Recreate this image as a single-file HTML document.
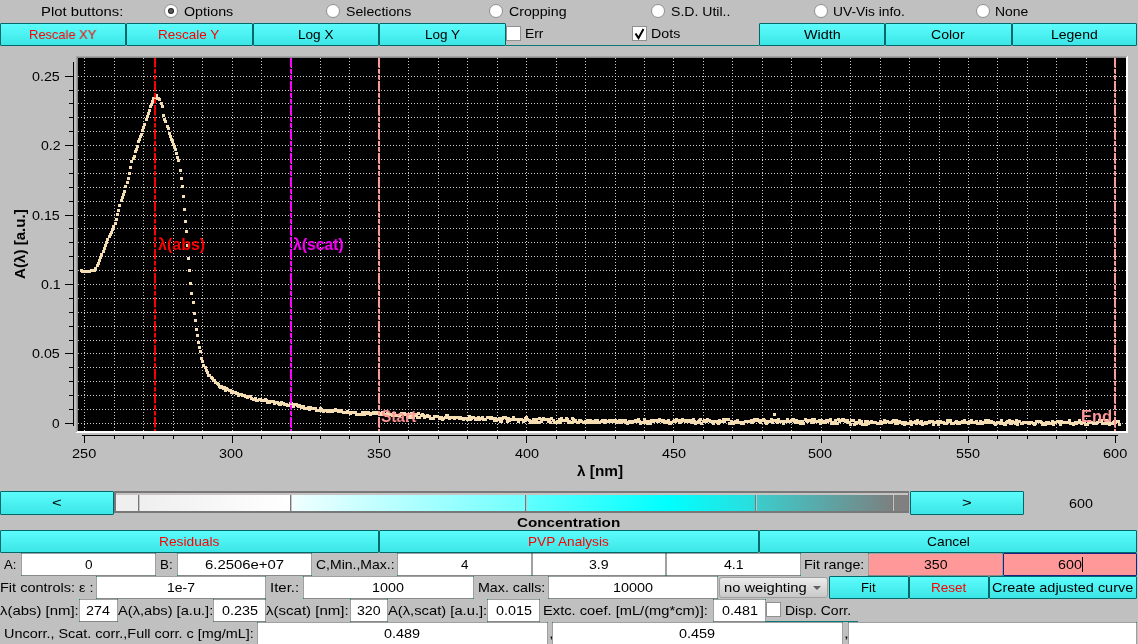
<!DOCTYPE html><html><head><meta charset="utf-8"><style>
*{margin:0;padding:0}
html,body{width:1138px;height:644px;overflow:hidden;background:#c0c0c0;position:relative}
.t{position:absolute;font-family:"Liberation Sans",sans-serif;font-size:13px;line-height:20px;white-space:pre;transform-origin:0 0;will-change:transform}
.btn,.fld,.rad,.dot,.chk,.combo{position:absolute;box-sizing:border-box}
.btn{border:1px solid #006868;border-radius:1px;background:linear-gradient(#5cfcfc,#3ce6e6)}
.fld{background:#fff;border:1px solid #a0a0a0;border-bottom-color:#888}
.fld::before{content:'';position:absolute;left:-1px;top:-1px;right:-1px;bottom:-1px;background:linear-gradient(#1a8a8a,#1a8a8a) 0 0/1px 1px no-repeat,linear-gradient(#1a8a8a,#1a8a8a) 100% 0/1px 1px no-repeat,linear-gradient(#1a8a8a,#1a8a8a) 0 100%/1px 1px no-repeat,linear-gradient(#1a8a8a,#1a8a8a) 100% 100%/1px 1px no-repeat}
.fld.pink{background:#ff9999}
.fld.focus{border-color:#202080}
.rad{border-radius:50%;background:#fff;border:1px solid #909090}
.dot{border-radius:50%;background:radial-gradient(circle,#5a5a5a 0,#5a5a5a 1.5px,#222 2.2px)}
.chk{background:#fff;border:1px solid #909090}
.combo{border:1px solid #a0a0a0;border-radius:3px;background:linear-gradient(#ececec,#c8c8c8)}
svg.plot{position:absolute;left:0;top:0}
</style></head><body><div class="t" style="left:40.86px;top:2px;color:#000;transform:scaleX(1.1396)">Plot buttons:</div><div class="rad" style="left:164px;top:4px;width:14px;height:14px;"></div><div class="dot" style="left:168px;top:8px;width:6px;height:6px;"></div><div class="t" style="left:184.14px;top:2px;color:#000;transform:scaleX(1.0997)">Options</div><div class="rad" style="left:326px;top:4px;width:14px;height:14px;"></div><div class="t" style="left:346.06px;top:2px;color:#000;transform:scaleX(1.0883)">Selections</div><div class="rad" style="left:489px;top:4px;width:14px;height:14px;"></div><div class="t" style="left:509.05px;top:2px;color:#000;transform:scaleX(1.0906)">Cropping</div><div class="rad" style="left:651px;top:4px;width:14px;height:14px;"></div><div class="t" style="left:671.46px;top:2px;color:#000;transform:scaleX(1.0829)">S.D. Util..</div><div class="rad" style="left:814px;top:4px;width:14px;height:14px;"></div><div class="t" style="left:833.44px;top:2px;color:#000;transform:scaleX(1.0601)">UV-Vis info.</div><div class="rad" style="left:976px;top:4px;width:14px;height:14px;"></div><div class="t" style="left:994.93px;top:2px;color:#000;transform:scaleX(1.0718)">None</div><div style="position:absolute;left:506px;top:45px;width:253px;height:1px;background:#0a7878"></div><div class="btn" style="left:0px;top:23px;width:126px;height:23px;"></div><div class="t" style="left:29.01px;top:25px;color:#ff0000;transform:scaleX(0.9910)">Rescale XY</div><div class="btn" style="left:126px;top:23px;width:127px;height:23px;"></div><div class="t" style="left:158.47px;top:25px;color:#ff0000;transform:scaleX(1.0396)">Rescale Y</div><div class="btn" style="left:253px;top:23px;width:126px;height:23px;"></div><div class="t" style="left:297.87px;top:25px;color:#000;transform:scaleX(1.0452)">Log X</div><div class="btn" style="left:379px;top:23px;width:127px;height:23px;"></div><div class="t" style="left:424.62px;top:25px;color:#000;transform:scaleX(1.0365)">Log Y</div><div class="chk" style="left:506px;top:26px;width:15px;height:15px;"></div><div class="t" style="left:524.94px;top:24px;color:#000;transform:scaleX(1.0640)">Err</div><div class="chk" style="left:632px;top:26px;width:15px;height:15px;"></div><svg style="position:absolute;left:632px;top:26px" width="15" height="15"><path d="M3.5 7.5 L6.5 12 L11.5 3" stroke="#000" stroke-width="2" fill="none"/></svg><div class="t" style="left:651.41px;top:24px;color:#000;transform:scaleX(1.0940)">Dots</div><div class="btn" style="left:759px;top:23px;width:126px;height:23px;"></div><div class="t" style="left:804.12px;top:25px;color:#000;transform:scaleX(1.1036)">Width</div><div class="btn" style="left:885px;top:23px;width:127px;height:23px;"></div><div class="t" style="left:931.45px;top:25px;color:#000;transform:scaleX(1.0825)">Color</div><div class="btn" style="left:1012px;top:23px;width:125px;height:23px;"></div><div class="t" style="left:1051.06px;top:25px;color:#000;transform:scaleX(1.0776)">Legend</div><svg class="plot" width="1138" height="644" shape-rendering="crispEdges"><rect x="76" y="56" width="1052" height="377" fill="#a4a4a4"/><rect x="77" y="57" width="1051" height="375" fill="#888888"/><rect x="1127" y="56" width="1" height="377" fill="#ffffff"/><rect x="1126" y="57" width="1" height="376" fill="#ffffff"/><rect x="77" y="431" width="1051" height="1" fill="#ffffff"/><rect x="76" y="432" width="1052" height="1" fill="#ffffff"/><rect x="78" y="58" width="1048" height="373" fill="#000000"/><line x1="84.5" y1="58" x2="84.5" y2="431" stroke="#cccccc" stroke-width="1" stroke-dasharray="1 2"/><line x1="114.5" y1="58" x2="114.5" y2="431" stroke="#cccccc" stroke-width="1" stroke-dasharray="1 2"/><line x1="143.5" y1="58" x2="143.5" y2="431" stroke="#cccccc" stroke-width="1" stroke-dasharray="1 2"/><line x1="173.5" y1="58" x2="173.5" y2="431" stroke="#cccccc" stroke-width="1" stroke-dasharray="1 2"/><line x1="202.5" y1="58" x2="202.5" y2="431" stroke="#cccccc" stroke-width="1" stroke-dasharray="1 2"/><line x1="232.5" y1="58" x2="232.5" y2="431" stroke="#cccccc" stroke-width="1" stroke-dasharray="1 2"/><line x1="261.5" y1="58" x2="261.5" y2="431" stroke="#cccccc" stroke-width="1" stroke-dasharray="1 2"/><line x1="291.5" y1="58" x2="291.5" y2="431" stroke="#cccccc" stroke-width="1" stroke-dasharray="1 2"/><line x1="320.5" y1="58" x2="320.5" y2="431" stroke="#cccccc" stroke-width="1" stroke-dasharray="1 2"/><line x1="349.5" y1="58" x2="349.5" y2="431" stroke="#cccccc" stroke-width="1" stroke-dasharray="1 2"/><line x1="379.5" y1="58" x2="379.5" y2="431" stroke="#cccccc" stroke-width="1" stroke-dasharray="1 2"/><line x1="408.5" y1="58" x2="408.5" y2="431" stroke="#cccccc" stroke-width="1" stroke-dasharray="1 2"/><line x1="438.5" y1="58" x2="438.5" y2="431" stroke="#cccccc" stroke-width="1" stroke-dasharray="1 2"/><line x1="467.5" y1="58" x2="467.5" y2="431" stroke="#cccccc" stroke-width="1" stroke-dasharray="1 2"/><line x1="497.5" y1="58" x2="497.5" y2="431" stroke="#cccccc" stroke-width="1" stroke-dasharray="1 2"/><line x1="526.5" y1="58" x2="526.5" y2="431" stroke="#cccccc" stroke-width="1" stroke-dasharray="1 2"/><line x1="556.5" y1="58" x2="556.5" y2="431" stroke="#cccccc" stroke-width="1" stroke-dasharray="1 2"/><line x1="585.5" y1="58" x2="585.5" y2="431" stroke="#cccccc" stroke-width="1" stroke-dasharray="1 2"/><line x1="615.5" y1="58" x2="615.5" y2="431" stroke="#cccccc" stroke-width="1" stroke-dasharray="1 2"/><line x1="644.5" y1="58" x2="644.5" y2="431" stroke="#cccccc" stroke-width="1" stroke-dasharray="1 2"/><line x1="673.5" y1="58" x2="673.5" y2="431" stroke="#cccccc" stroke-width="1" stroke-dasharray="1 2"/><line x1="703.5" y1="58" x2="703.5" y2="431" stroke="#cccccc" stroke-width="1" stroke-dasharray="1 2"/><line x1="732.5" y1="58" x2="732.5" y2="431" stroke="#cccccc" stroke-width="1" stroke-dasharray="1 2"/><line x1="762.5" y1="58" x2="762.5" y2="431" stroke="#cccccc" stroke-width="1" stroke-dasharray="1 2"/><line x1="791.5" y1="58" x2="791.5" y2="431" stroke="#cccccc" stroke-width="1" stroke-dasharray="1 2"/><line x1="821.5" y1="58" x2="821.5" y2="431" stroke="#cccccc" stroke-width="1" stroke-dasharray="1 2"/><line x1="850.5" y1="58" x2="850.5" y2="431" stroke="#cccccc" stroke-width="1" stroke-dasharray="1 2"/><line x1="880.5" y1="58" x2="880.5" y2="431" stroke="#cccccc" stroke-width="1" stroke-dasharray="1 2"/><line x1="909.5" y1="58" x2="909.5" y2="431" stroke="#cccccc" stroke-width="1" stroke-dasharray="1 2"/><line x1="939.5" y1="58" x2="939.5" y2="431" stroke="#cccccc" stroke-width="1" stroke-dasharray="1 2"/><line x1="968.5" y1="58" x2="968.5" y2="431" stroke="#cccccc" stroke-width="1" stroke-dasharray="1 2"/><line x1="997.5" y1="58" x2="997.5" y2="431" stroke="#cccccc" stroke-width="1" stroke-dasharray="1 2"/><line x1="1027.5" y1="58" x2="1027.5" y2="431" stroke="#cccccc" stroke-width="1" stroke-dasharray="1 2"/><line x1="1056.5" y1="58" x2="1056.5" y2="431" stroke="#cccccc" stroke-width="1" stroke-dasharray="1 2"/><line x1="1086.5" y1="58" x2="1086.5" y2="431" stroke="#cccccc" stroke-width="1" stroke-dasharray="1 2"/><line x1="1115.5" y1="58" x2="1115.5" y2="431" stroke="#cccccc" stroke-width="1" stroke-dasharray="1 2"/><line x1="78" y1="423.5" x2="1126" y2="423.5" stroke="#cccccc" stroke-width="1" stroke-dasharray="1 2"/><line x1="78" y1="409.5" x2="1126" y2="409.5" stroke="#cccccc" stroke-width="1" stroke-dasharray="1 2"/><line x1="78" y1="395.5" x2="1126" y2="395.5" stroke="#cccccc" stroke-width="1" stroke-dasharray="1 2"/><line x1="78" y1="381.5" x2="1126" y2="381.5" stroke="#cccccc" stroke-width="1" stroke-dasharray="1 2"/><line x1="78" y1="367.5" x2="1126" y2="367.5" stroke="#cccccc" stroke-width="1" stroke-dasharray="1 2"/><line x1="78" y1="353.5" x2="1126" y2="353.5" stroke="#cccccc" stroke-width="1" stroke-dasharray="1 2"/><line x1="78" y1="340.5" x2="1126" y2="340.5" stroke="#cccccc" stroke-width="1" stroke-dasharray="1 2"/><line x1="78" y1="326.5" x2="1126" y2="326.5" stroke="#cccccc" stroke-width="1" stroke-dasharray="1 2"/><line x1="78" y1="312.5" x2="1126" y2="312.5" stroke="#cccccc" stroke-width="1" stroke-dasharray="1 2"/><line x1="78" y1="298.5" x2="1126" y2="298.5" stroke="#cccccc" stroke-width="1" stroke-dasharray="1 2"/><line x1="78" y1="284.5" x2="1126" y2="284.5" stroke="#cccccc" stroke-width="1" stroke-dasharray="1 2"/><line x1="78" y1="270.5" x2="1126" y2="270.5" stroke="#cccccc" stroke-width="1" stroke-dasharray="1 2"/><line x1="78" y1="256.5" x2="1126" y2="256.5" stroke="#cccccc" stroke-width="1" stroke-dasharray="1 2"/><line x1="78" y1="242.5" x2="1126" y2="242.5" stroke="#cccccc" stroke-width="1" stroke-dasharray="1 2"/><line x1="78" y1="228.5" x2="1126" y2="228.5" stroke="#cccccc" stroke-width="1" stroke-dasharray="1 2"/><line x1="78" y1="215.5" x2="1126" y2="215.5" stroke="#cccccc" stroke-width="1" stroke-dasharray="1 2"/><line x1="78" y1="201.5" x2="1126" y2="201.5" stroke="#cccccc" stroke-width="1" stroke-dasharray="1 2"/><line x1="78" y1="187.5" x2="1126" y2="187.5" stroke="#cccccc" stroke-width="1" stroke-dasharray="1 2"/><line x1="78" y1="173.5" x2="1126" y2="173.5" stroke="#cccccc" stroke-width="1" stroke-dasharray="1 2"/><line x1="78" y1="159.5" x2="1126" y2="159.5" stroke="#cccccc" stroke-width="1" stroke-dasharray="1 2"/><line x1="78" y1="145.5" x2="1126" y2="145.5" stroke="#cccccc" stroke-width="1" stroke-dasharray="1 2"/><line x1="78" y1="131.5" x2="1126" y2="131.5" stroke="#cccccc" stroke-width="1" stroke-dasharray="1 2"/><line x1="78" y1="117.5" x2="1126" y2="117.5" stroke="#cccccc" stroke-width="1" stroke-dasharray="1 2"/><line x1="78" y1="103.5" x2="1126" y2="103.5" stroke="#cccccc" stroke-width="1" stroke-dasharray="1 2"/><line x1="78" y1="90.5" x2="1126" y2="90.5" stroke="#cccccc" stroke-width="1" stroke-dasharray="1 2"/><line x1="78" y1="76.5" x2="1126" y2="76.5" stroke="#cccccc" stroke-width="1" stroke-dasharray="1 2"/><path d="M80 269h3v3h-3zM81 270h3v3h-3zM82 270h3v3h-3zM84 270h3v3h-3zM85 270h3v3h-3zM86 270h3v3h-3zM87 270h3v3h-3zM88 270h3v3h-3zM90 269h3v3h-3zM91 269h3v3h-3zM92 269h3v3h-3zM93 269h3v3h-3zM94 267h3v3h-3zM96 264h3v3h-3zM97 262h3v3h-3zM98 259h3v3h-3zM99 256h3v3h-3zM100 253h3v3h-3zM102 250h3v3h-3zM103 247h3v3h-3zM104 244h3v3h-3zM105 241h3v3h-3zM106 238h3v3h-3zM108 235h3v3h-3zM109 233h3v3h-3zM110 231h3v3h-3zM111 228h3v3h-3zM112 225h3v3h-3zM114 222h3v3h-3zM115 218h3v3h-3zM116 213h3v3h-3zM117 209h3v3h-3zM118 204h3v3h-3zM120 199h3v3h-3zM121 196h3v3h-3zM122 193h3v3h-3zM123 190h3v3h-3zM124 185h3v3h-3zM126 181h3v3h-3zM127 177h3v3h-3zM128 172h3v3h-3zM129 166h3v3h-3zM130 160h3v3h-3zM204 366h3v3h-3zM205 369h3v3h-3zM206 371h3v3h-3zM207 374h3v3h-3zM208 374h3v3h-3zM210 376h3v3h-3zM211 377h3v3h-3zM212 379h3v3h-3zM213 379h3v3h-3zM214 381h3v3h-3zM216 382h3v3h-3zM217 383h3v3h-3zM218 385h3v3h-3zM219 386h3v3h-3zM220 385h3v3h-3zM222 387h3v3h-3zM223 386h3v3h-3zM224 389h3v3h-3zM225 387h3v3h-3zM226 388h3v3h-3zM228 389h3v3h-3zM229 389h3v3h-3zM230 391h3v3h-3zM231 390h3v3h-3zM232 391h3v3h-3zM234 391h3v3h-3zM235 392h3v3h-3zM236 392h3v3h-3zM237 394h3v3h-3zM238 393h3v3h-3zM240 393h3v3h-3zM241 394h3v3h-3zM242 394h3v3h-3zM243 394h3v3h-3zM244 395h3v3h-3zM246 396h3v3h-3zM247 395h3v3h-3zM248 395h3v3h-3zM249 395h3v3h-3zM250 397h3v3h-3zM252 398h3v3h-3zM253 398h3v3h-3zM254 397h3v3h-3zM255 399h3v3h-3zM256 399h3v3h-3zM258 398h3v3h-3zM259 398h3v3h-3zM260 399h3v3h-3zM261 399h3v3h-3zM262 399h3v3h-3zM264 398h3v3h-3zM265 399h3v3h-3zM266 401h3v3h-3zM267 400h3v3h-3zM268 401h3v3h-3zM270 400h3v3h-3zM271 400h3v3h-3zM272 400h3v3h-3zM273 402h3v3h-3zM274 401h3v3h-3zM276 401h3v3h-3zM277 402h3v3h-3zM278 403h3v3h-3zM279 403h3v3h-3zM280 401h3v3h-3zM282 402h3v3h-3zM283 403h3v3h-3zM284 403h3v3h-3zM285 403h3v3h-3zM286 404h3v3h-3zM288 404h3v3h-3zM289 402h3v3h-3zM290 402h3v3h-3zM291 403h3v3h-3zM292 405h3v3h-3zM294 403h3v3h-3zM295 403h3v3h-3zM296 404h3v3h-3zM297 405h3v3h-3zM298 404h3v3h-3zM300 406h3v3h-3zM301 405h3v3h-3zM302 405h3v3h-3zM303 407h3v3h-3zM304 407h3v3h-3zM306 407h3v3h-3zM307 406h3v3h-3zM308 408h3v3h-3zM309 406h3v3h-3zM310 407h3v3h-3zM312 407h3v3h-3zM313 407h3v3h-3zM314 407h3v3h-3zM315 409h3v3h-3zM316 409h3v3h-3zM318 409h3v3h-3zM319 407h3v3h-3zM320 408h3v3h-3zM321 409h3v3h-3zM322 410h3v3h-3zM324 409h3v3h-3zM325 409h3v3h-3zM326 410h3v3h-3zM327 409h3v3h-3zM328 410h3v3h-3zM330 409h3v3h-3zM331 410h3v3h-3zM332 409h3v3h-3zM333 409h3v3h-3zM334 408h3v3h-3zM336 409h3v3h-3zM337 410h3v3h-3zM338 410h3v3h-3zM339 410h3v3h-3zM340 409h3v3h-3zM342 411h3v3h-3zM343 411h3v3h-3zM344 411h3v3h-3zM345 411h3v3h-3zM346 410h3v3h-3zM348 411h3v3h-3zM349 412h3v3h-3zM350 411h3v3h-3zM351 411h3v3h-3zM352 411h3v3h-3zM354 411h3v3h-3zM355 413h3v3h-3zM356 413h3v3h-3zM357 413h3v3h-3zM358 413h3v3h-3zM360 413h3v3h-3zM361 411h3v3h-3zM362 413h3v3h-3zM363 413h3v3h-3zM364 411h3v3h-3zM366 412h3v3h-3zM367 411h3v3h-3zM368 412h3v3h-3zM369 413h3v3h-3zM370 412h3v3h-3zM372 411h3v3h-3zM373 412h3v3h-3zM374 411h3v3h-3zM375 411h3v3h-3zM376 412h3v3h-3zM378 413h3v3h-3zM379 412h3v3h-3zM380 413h3v3h-3zM381 411h3v3h-3zM382 412h3v3h-3zM384 413h3v3h-3zM385 414h3v3h-3zM386 412h3v3h-3zM387 413h3v3h-3zM388 413h3v3h-3zM390 413h3v3h-3zM391 414h3v3h-3zM392 412h3v3h-3zM393 412h3v3h-3zM394 414h3v3h-3zM396 414h3v3h-3zM397 414h3v3h-3zM398 414h3v3h-3zM399 413h3v3h-3zM400 412h3v3h-3zM402 412h3v3h-3zM403 412h3v3h-3zM404 413h3v3h-3zM405 413h3v3h-3zM406 415h3v3h-3zM408 413h3v3h-3zM409 416h3v3h-3zM410 412h3v3h-3zM411 414h3v3h-3zM412 416h3v3h-3zM414 414h3v3h-3zM415 413h3v3h-3zM416 416h3v3h-3zM417 412h3v3h-3zM418 416h3v3h-3zM420 414h3v3h-3zM421 413h3v3h-3zM422 414h3v3h-3zM423 416h3v3h-3zM424 415h3v3h-3zM426 414h3v3h-3zM427 415h3v3h-3zM428 415h3v3h-3zM429 417h3v3h-3zM430 417h3v3h-3zM432 417h3v3h-3zM433 415h3v3h-3zM434 415h3v3h-3zM435 415h3v3h-3zM436 415h3v3h-3zM438 417h3v3h-3zM439 416h3v3h-3zM440 416h3v3h-3zM441 418h3v3h-3zM442 417h3v3h-3zM444 416h3v3h-3zM445 414h3v3h-3zM446 414h3v3h-3zM447 416h3v3h-3zM448 417h3v3h-3zM450 416h3v3h-3zM451 416h3v3h-3zM452 416h3v3h-3zM453 417h3v3h-3zM454 416h3v3h-3zM456 416h3v3h-3zM457 416h3v3h-3zM458 417h3v3h-3zM459 416h3v3h-3zM460 417h3v3h-3zM462 418h3v3h-3zM463 417h3v3h-3zM464 417h3v3h-3zM465 417h3v3h-3zM466 418h3v3h-3zM468 415h3v3h-3zM469 418h3v3h-3zM470 417h3v3h-3zM471 416h3v3h-3zM472 416h3v3h-3zM474 418h3v3h-3zM475 417h3v3h-3zM476 418h3v3h-3zM477 416h3v3h-3zM478 418h3v3h-3zM480 417h3v3h-3zM481 416h3v3h-3zM482 418h3v3h-3zM483 418h3v3h-3zM484 418h3v3h-3zM486 416h3v3h-3zM487 416h3v3h-3zM488 416h3v3h-3zM489 417h3v3h-3zM490 416h3v3h-3zM492 417h3v3h-3zM493 419h3v3h-3zM494 417h3v3h-3zM495 419h3v3h-3zM496 418h3v3h-3zM498 417h3v3h-3zM499 420h3v3h-3zM500 420h3v3h-3zM501 417h3v3h-3zM502 416h3v3h-3zM504 416h3v3h-3zM505 417h3v3h-3zM506 420h3v3h-3zM507 417h3v3h-3zM508 419h3v3h-3zM510 418h3v3h-3zM511 418h3v3h-3zM512 416h3v3h-3zM513 418h3v3h-3zM514 418h3v3h-3zM516 418h3v3h-3zM517 420h3v3h-3zM518 418h3v3h-3zM519 418h3v3h-3zM520 418h3v3h-3zM522 420h3v3h-3zM523 419h3v3h-3zM524 417h3v3h-3zM525 416h3v3h-3zM526 418h3v3h-3zM528 419h3v3h-3zM529 421h3v3h-3zM530 420h3v3h-3zM531 421h3v3h-3zM532 418h3v3h-3zM534 421h3v3h-3zM535 418h3v3h-3zM536 421h3v3h-3zM537 421h3v3h-3zM538 417h3v3h-3zM540 420h3v3h-3zM541 418h3v3h-3zM542 417h3v3h-3zM543 418h3v3h-3zM544 418h3v3h-3zM546 418h3v3h-3zM547 420h3v3h-3zM548 418h3v3h-3zM549 421h3v3h-3zM550 417h3v3h-3zM552 419h3v3h-3zM553 421h3v3h-3zM554 421h3v3h-3zM555 421h3v3h-3zM556 420h3v3h-3zM558 418h3v3h-3zM559 421h3v3h-3zM560 417h3v3h-3zM561 419h3v3h-3zM562 419h3v3h-3zM564 419h3v3h-3zM565 417h3v3h-3zM566 418h3v3h-3zM567 421h3v3h-3zM568 420h3v3h-3zM570 421h3v3h-3zM571 417h3v3h-3zM572 418h3v3h-3zM573 420h3v3h-3zM574 419h3v3h-3zM576 421h3v3h-3zM577 421h3v3h-3zM578 419h3v3h-3zM579 419h3v3h-3zM580 420h3v3h-3zM582 421h3v3h-3zM583 421h3v3h-3zM584 420h3v3h-3zM585 421h3v3h-3zM586 419h3v3h-3zM588 421h3v3h-3zM589 419h3v3h-3zM590 421h3v3h-3zM591 420h3v3h-3zM592 421h3v3h-3zM594 419h3v3h-3zM595 421h3v3h-3zM596 419h3v3h-3zM597 421h3v3h-3zM598 421h3v3h-3zM600 420h3v3h-3zM601 419h3v3h-3zM602 420h3v3h-3zM603 421h3v3h-3zM604 419h3v3h-3zM606 420h3v3h-3zM607 420h3v3h-3zM608 419h3v3h-3zM609 419h3v3h-3zM610 420h3v3h-3zM612 419h3v3h-3zM613 420h3v3h-3zM614 419h3v3h-3zM615 421h3v3h-3zM616 420h3v3h-3zM618 419h3v3h-3zM619 421h3v3h-3zM620 421h3v3h-3zM621 419h3v3h-3zM622 420h3v3h-3zM624 419h3v3h-3zM625 421h3v3h-3zM626 422h3v3h-3zM627 421h3v3h-3zM628 420h3v3h-3zM630 421h3v3h-3zM631 420h3v3h-3zM632 420h3v3h-3zM633 420h3v3h-3zM634 419h3v3h-3zM636 420h3v3h-3zM637 418h3v3h-3zM638 420h3v3h-3zM639 422h3v3h-3zM640 421h3v3h-3zM642 421h3v3h-3zM643 418h3v3h-3zM644 421h3v3h-3zM645 420h3v3h-3zM646 422h3v3h-3zM648 420h3v3h-3zM649 422h3v3h-3zM650 419h3v3h-3zM651 419h3v3h-3zM652 420h3v3h-3zM654 419h3v3h-3zM655 419h3v3h-3zM656 420h3v3h-3zM657 420h3v3h-3zM658 418h3v3h-3zM660 419h3v3h-3zM661 420h3v3h-3zM662 419h3v3h-3zM663 421h3v3h-3zM664 420h3v3h-3zM666 421h3v3h-3zM667 419h3v3h-3zM668 422h3v3h-3zM669 422h3v3h-3zM670 421h3v3h-3zM672 420h3v3h-3zM673 419h3v3h-3zM674 420h3v3h-3zM675 418h3v3h-3zM676 419h3v3h-3zM678 421h3v3h-3zM679 419h3v3h-3zM680 420h3v3h-3zM681 418h3v3h-3zM682 419h3v3h-3zM684 420h3v3h-3zM685 419h3v3h-3zM686 420h3v3h-3zM687 419h3v3h-3zM688 420h3v3h-3zM690 419h3v3h-3zM691 421h3v3h-3zM692 418h3v3h-3zM693 420h3v3h-3zM694 422h3v3h-3zM696 421h3v3h-3zM697 420h3v3h-3zM698 419h3v3h-3zM699 418h3v3h-3zM700 422h3v3h-3zM702 420h3v3h-3zM703 419h3v3h-3zM704 419h3v3h-3zM705 420h3v3h-3zM706 418h3v3h-3zM708 419h3v3h-3zM709 420h3v3h-3zM710 420h3v3h-3zM711 420h3v3h-3zM712 422h3v3h-3zM714 420h3v3h-3zM715 420h3v3h-3zM716 421h3v3h-3zM717 422h3v3h-3zM718 419h3v3h-3zM720 420h3v3h-3zM721 420h3v3h-3zM722 418h3v3h-3zM723 420h3v3h-3zM724 418h3v3h-3zM726 418h3v3h-3zM727 418h3v3h-3zM728 422h3v3h-3zM729 422h3v3h-3zM730 420h3v3h-3zM732 422h3v3h-3zM733 421h3v3h-3zM734 420h3v3h-3zM735 421h3v3h-3zM736 419h3v3h-3zM738 421h3v3h-3zM739 421h3v3h-3zM740 422h3v3h-3zM741 421h3v3h-3zM742 422h3v3h-3zM744 420h3v3h-3zM745 420h3v3h-3zM746 420h3v3h-3zM747 420h3v3h-3zM748 420h3v3h-3zM750 419h3v3h-3zM751 421h3v3h-3zM752 420h3v3h-3zM753 418h3v3h-3zM754 419h3v3h-3zM756 418h3v3h-3zM757 419h3v3h-3zM758 420h3v3h-3zM759 421h3v3h-3zM760 419h3v3h-3zM762 418h3v3h-3zM763 419h3v3h-3zM764 421h3v3h-3zM765 422h3v3h-3zM766 420h3v3h-3zM768 420h3v3h-3zM769 420h3v3h-3zM770 418h3v3h-3zM771 421h3v3h-3zM772 419h3v3h-3zM774 419h3v3h-3zM775 420h3v3h-3zM776 421h3v3h-3zM777 418h3v3h-3zM778 420h3v3h-3zM780 420h3v3h-3zM781 420h3v3h-3zM782 422h3v3h-3zM783 420h3v3h-3zM784 420h3v3h-3zM786 418h3v3h-3zM787 420h3v3h-3zM788 420h3v3h-3zM789 420h3v3h-3zM790 419h3v3h-3zM792 418h3v3h-3zM793 420h3v3h-3zM794 421h3v3h-3zM795 419h3v3h-3zM796 421h3v3h-3zM798 420h3v3h-3zM799 422h3v3h-3zM800 420h3v3h-3zM801 420h3v3h-3zM802 422h3v3h-3zM804 418h3v3h-3zM805 419h3v3h-3zM806 420h3v3h-3zM807 419h3v3h-3zM808 419h3v3h-3zM810 421h3v3h-3zM811 418h3v3h-3zM812 421h3v3h-3zM813 418h3v3h-3zM814 420h3v3h-3zM816 420h3v3h-3zM817 420h3v3h-3zM818 419h3v3h-3zM819 422h3v3h-3zM820 419h3v3h-3zM822 421h3v3h-3zM823 420h3v3h-3zM824 421h3v3h-3zM825 419h3v3h-3zM826 420h3v3h-3zM828 419h3v3h-3zM829 418h3v3h-3zM830 422h3v3h-3zM831 421h3v3h-3zM832 422h3v3h-3zM834 419h3v3h-3zM835 422h3v3h-3zM836 422h3v3h-3zM837 418h3v3h-3zM838 420h3v3h-3zM840 419h3v3h-3zM841 418h3v3h-3zM842 418h3v3h-3zM843 419h3v3h-3zM844 420h3v3h-3zM846 419h3v3h-3zM847 421h3v3h-3zM848 421h3v3h-3zM849 423h3v3h-3zM850 419h3v3h-3zM852 419h3v3h-3zM853 423h3v3h-3zM854 421h3v3h-3zM855 422h3v3h-3zM856 421h3v3h-3zM858 419h3v3h-3zM859 422h3v3h-3zM860 420h3v3h-3zM861 423h3v3h-3zM862 423h3v3h-3zM864 420h3v3h-3zM865 423h3v3h-3zM866 420h3v3h-3zM867 422h3v3h-3zM868 421h3v3h-3zM870 420h3v3h-3zM871 421h3v3h-3zM872 421h3v3h-3zM873 421h3v3h-3zM874 421h3v3h-3zM876 422h3v3h-3zM877 422h3v3h-3zM878 422h3v3h-3zM879 420h3v3h-3zM880 422h3v3h-3zM882 421h3v3h-3zM883 419h3v3h-3zM884 421h3v3h-3zM885 420h3v3h-3zM886 420h3v3h-3zM888 421h3v3h-3zM889 421h3v3h-3zM890 421h3v3h-3zM891 420h3v3h-3zM892 419h3v3h-3zM894 422h3v3h-3zM895 419h3v3h-3zM896 422h3v3h-3zM897 421h3v3h-3zM898 420h3v3h-3zM900 421h3v3h-3zM901 422h3v3h-3zM902 421h3v3h-3zM903 423h3v3h-3zM904 421h3v3h-3zM906 422h3v3h-3zM907 422h3v3h-3zM908 422h3v3h-3zM909 420h3v3h-3zM910 423h3v3h-3zM912 421h3v3h-3zM913 421h3v3h-3zM914 420h3v3h-3zM915 422h3v3h-3zM916 419h3v3h-3zM918 421h3v3h-3zM919 422h3v3h-3zM920 420h3v3h-3zM921 423h3v3h-3zM922 422h3v3h-3zM924 421h3v3h-3zM925 422h3v3h-3zM926 421h3v3h-3zM927 421h3v3h-3zM928 420h3v3h-3zM930 420h3v3h-3zM931 420h3v3h-3zM932 423h3v3h-3zM933 421h3v3h-3zM934 421h3v3h-3zM936 420h3v3h-3zM937 423h3v3h-3zM938 421h3v3h-3zM939 420h3v3h-3zM940 421h3v3h-3zM942 421h3v3h-3zM943 422h3v3h-3zM944 422h3v3h-3zM945 422h3v3h-3zM946 419h3v3h-3zM948 420h3v3h-3zM949 419h3v3h-3zM950 422h3v3h-3zM951 422h3v3h-3zM952 422h3v3h-3zM954 421h3v3h-3zM955 420h3v3h-3zM956 422h3v3h-3zM957 421h3v3h-3zM958 422h3v3h-3zM960 421h3v3h-3zM961 420h3v3h-3zM962 421h3v3h-3zM963 419h3v3h-3zM964 421h3v3h-3zM966 421h3v3h-3zM967 422h3v3h-3zM968 420h3v3h-3zM969 421h3v3h-3zM970 419h3v3h-3zM972 421h3v3h-3zM973 421h3v3h-3zM974 421h3v3h-3zM975 420h3v3h-3zM976 422h3v3h-3zM978 422h3v3h-3zM979 420h3v3h-3zM980 421h3v3h-3zM981 422h3v3h-3zM982 421h3v3h-3zM984 419h3v3h-3zM985 421h3v3h-3zM986 420h3v3h-3zM987 419h3v3h-3zM988 421h3v3h-3zM990 420h3v3h-3zM991 421h3v3h-3zM992 421h3v3h-3zM993 422h3v3h-3zM994 423h3v3h-3zM996 421h3v3h-3zM997 421h3v3h-3zM998 421h3v3h-3zM999 422h3v3h-3zM1000 419h3v3h-3zM1002 422h3v3h-3zM1003 423h3v3h-3zM1004 423h3v3h-3zM1005 421h3v3h-3zM1006 420h3v3h-3zM1008 419h3v3h-3zM1009 422h3v3h-3zM1010 422h3v3h-3zM1011 420h3v3h-3zM1012 421h3v3h-3zM1014 422h3v3h-3zM1015 419h3v3h-3zM1016 423h3v3h-3zM1017 420h3v3h-3zM1018 420h3v3h-3zM1020 422h3v3h-3zM1021 422h3v3h-3zM1022 421h3v3h-3zM1023 421h3v3h-3zM1024 421h3v3h-3zM1026 421h3v3h-3zM1027 421h3v3h-3zM1028 422h3v3h-3zM1029 421h3v3h-3zM1030 421h3v3h-3zM1032 422h3v3h-3zM1033 423h3v3h-3zM1034 422h3v3h-3zM1035 420h3v3h-3zM1036 420h3v3h-3zM1038 420h3v3h-3zM1039 420h3v3h-3zM1040 421h3v3h-3zM1041 423h3v3h-3zM1042 422h3v3h-3zM1044 423h3v3h-3zM1045 421h3v3h-3zM1046 422h3v3h-3zM1047 421h3v3h-3zM1048 422h3v3h-3zM1050 422h3v3h-3zM1051 420h3v3h-3zM1052 423h3v3h-3zM1053 421h3v3h-3zM1054 421h3v3h-3zM1056 420h3v3h-3zM1057 420h3v3h-3zM1058 421h3v3h-3zM1059 423h3v3h-3zM1060 420h3v3h-3zM1062 421h3v3h-3zM1063 421h3v3h-3zM1064 421h3v3h-3zM1065 421h3v3h-3zM1066 421h3v3h-3zM1068 419h3v3h-3zM1069 422h3v3h-3zM1070 422h3v3h-3zM1071 422h3v3h-3zM1072 423h3v3h-3zM1074 421h3v3h-3zM1075 422h3v3h-3zM1076 421h3v3h-3zM1077 421h3v3h-3zM1078 419h3v3h-3zM1080 422h3v3h-3zM1081 421h3v3h-3zM1082 421h3v3h-3zM1083 420h3v3h-3zM1084 423h3v3h-3zM1086 423h3v3h-3zM1087 421h3v3h-3zM1088 420h3v3h-3zM1089 421h3v3h-3zM1090 421h3v3h-3zM1092 422h3v3h-3zM1093 422h3v3h-3zM1094 422h3v3h-3zM1095 422h3v3h-3zM1096 421h3v3h-3zM1098 419h3v3h-3zM1099 420h3v3h-3zM1100 419h3v3h-3zM1101 422h3v3h-3zM1102 422h3v3h-3zM1104 422h3v3h-3zM1105 419h3v3h-3zM1106 420h3v3h-3zM1107 422h3v3h-3zM1108 423h3v3h-3zM1110 422h3v3h-3zM1111 422h3v3h-3zM1112 421h3v3h-3zM1113 420h3v3h-3zM1114 421h3v3h-3zM1116 420h3v3h-3zM1117 420h3v3h-3zM1118 423h3v3h-3zM132 157h3v3h-3zM133 155h3v3h-3zM134 150h3v3h-3zM135 148h3v3h-3zM136 145h3v3h-3zM137 140h3v3h-3zM138 138h3v3h-3zM139 135h3v3h-3zM140 133h3v3h-3zM141 129h3v3h-3zM142 126h3v3h-3zM143 123h3v3h-3zM145 118h3v3h-3zM146 115h3v3h-3zM147 112h3v3h-3zM148 109h3v3h-3zM149 105h3v3h-3zM150 103h3v3h-3zM151 100h3v3h-3zM152 97h3v3h-3zM153 97h3v3h-3zM155 97h3v3h-3zM157 97h3v3h-3zM158 98h3v3h-3zM155 94h3v3h-3zM160 102h3v3h-3zM161 105h3v3h-3zM162 114h3v3h-3zM163 118h3v3h-3zM164 120h3v3h-3zM166 125h3v3h-3zM167 127h3v3h-3zM168 132h3v3h-3zM169 135h3v3h-3zM170 138h3v3h-3zM171 140h3v3h-3zM172 143h3v3h-3zM173 145h3v3h-3zM174 148h3v3h-3zM175 152h3v3h-3zM176 156h3v3h-3zM177 159h3v3h-3zM179 169h3v3h-3zM180 177h3v3h-3zM181 185h3v3h-3zM182 195h3v3h-3zM183 208h3v3h-3zM184 220h3v3h-3zM185 230h3v3h-3zM186 244h3v3h-3zM187 257h3v3h-3zM188 269h3v3h-3zM189 282h3v3h-3zM190 292h3v3h-3zM192 301h3v3h-3zM193 312h3v3h-3zM194 319h3v3h-3zM195 328h3v3h-3zM196 334h3v3h-3zM197 341h3v3h-3zM198 346h3v3h-3zM199 350h3v3h-3zM200 357h3v3h-3zM201 360h3v3h-3zM202 364h3v3h-3z" fill="#f5deb3"/><rect x="773" y="413" width="3" height="3" fill="#f5deb3"/><line x1="155" y1="58" x2="155" y2="431" stroke="#ff0000" stroke-width="2" stroke-dasharray="10.5 1.5 4.5 1.5 4.5 1.5" stroke-dashoffset="1" shape-rendering="geometricPrecision"/><line x1="291" y1="58" x2="291" y2="431" stroke="#ff00ff" stroke-width="2" stroke-dasharray="10.5 1.5 4.5 1.5 4.5 1.5" stroke-dashoffset="1" shape-rendering="geometricPrecision"/><line x1="379" y1="58" x2="379" y2="431" stroke="#ff9999" stroke-width="2" stroke-dasharray="10.5 1.5 4.5 1.5 4.5 1.5" stroke-dashoffset="1" shape-rendering="geometricPrecision"/><line x1="1115" y1="58" x2="1115" y2="431" stroke="#ff9999" stroke-width="2" stroke-dasharray="10.5 1.5 4.5 1.5 4.5 1.5" stroke-dashoffset="1" shape-rendering="geometricPrecision"/><rect x="73" y="62" width="1" height="364" fill="#000"/><rect x="65" y="423" width="8" height="1" fill="#000"/><rect x="69" y="409" width="4" height="1" fill="#000"/><rect x="69" y="395" width="4" height="1" fill="#000"/><rect x="69" y="381" width="4" height="1" fill="#000"/><rect x="69" y="367" width="4" height="1" fill="#000"/><rect x="65" y="353" width="8" height="1" fill="#000"/><rect x="69" y="340" width="4" height="1" fill="#000"/><rect x="69" y="326" width="4" height="1" fill="#000"/><rect x="69" y="312" width="4" height="1" fill="#000"/><rect x="69" y="298" width="4" height="1" fill="#000"/><rect x="65" y="284" width="8" height="1" fill="#000"/><rect x="69" y="270" width="4" height="1" fill="#000"/><rect x="69" y="256" width="4" height="1" fill="#000"/><rect x="69" y="242" width="4" height="1" fill="#000"/><rect x="69" y="228" width="4" height="1" fill="#000"/><rect x="65" y="215" width="8" height="1" fill="#000"/><rect x="69" y="201" width="4" height="1" fill="#000"/><rect x="69" y="187" width="4" height="1" fill="#000"/><rect x="69" y="173" width="4" height="1" fill="#000"/><rect x="69" y="159" width="4" height="1" fill="#000"/><rect x="65" y="145" width="8" height="1" fill="#000"/><rect x="69" y="131" width="4" height="1" fill="#000"/><rect x="69" y="117" width="4" height="1" fill="#000"/><rect x="69" y="103" width="4" height="1" fill="#000"/><rect x="69" y="90" width="4" height="1" fill="#000"/><rect x="65" y="76" width="8" height="1" fill="#000"/><rect x="82" y="435" width="1036" height="1" fill="#000"/><rect x="84" y="435" width="1" height="8" fill="#000"/><rect x="114" y="435" width="1" height="4" fill="#000"/><rect x="143" y="435" width="1" height="4" fill="#000"/><rect x="173" y="435" width="1" height="4" fill="#000"/><rect x="202" y="435" width="1" height="4" fill="#000"/><rect x="232" y="435" width="1" height="8" fill="#000"/><rect x="261" y="435" width="1" height="4" fill="#000"/><rect x="291" y="435" width="1" height="4" fill="#000"/><rect x="320" y="435" width="1" height="4" fill="#000"/><rect x="349" y="435" width="1" height="4" fill="#000"/><rect x="379" y="435" width="1" height="8" fill="#000"/><rect x="408" y="435" width="1" height="4" fill="#000"/><rect x="438" y="435" width="1" height="4" fill="#000"/><rect x="467" y="435" width="1" height="4" fill="#000"/><rect x="497" y="435" width="1" height="4" fill="#000"/><rect x="526" y="435" width="1" height="8" fill="#000"/><rect x="556" y="435" width="1" height="4" fill="#000"/><rect x="585" y="435" width="1" height="4" fill="#000"/><rect x="615" y="435" width="1" height="4" fill="#000"/><rect x="644" y="435" width="1" height="4" fill="#000"/><rect x="673" y="435" width="1" height="8" fill="#000"/><rect x="703" y="435" width="1" height="4" fill="#000"/><rect x="732" y="435" width="1" height="4" fill="#000"/><rect x="762" y="435" width="1" height="4" fill="#000"/><rect x="791" y="435" width="1" height="4" fill="#000"/><rect x="821" y="435" width="1" height="8" fill="#000"/><rect x="850" y="435" width="1" height="4" fill="#000"/><rect x="880" y="435" width="1" height="4" fill="#000"/><rect x="909" y="435" width="1" height="4" fill="#000"/><rect x="939" y="435" width="1" height="4" fill="#000"/><rect x="968" y="435" width="1" height="8" fill="#000"/><rect x="997" y="435" width="1" height="4" fill="#000"/><rect x="1027" y="435" width="1" height="4" fill="#000"/><rect x="1056" y="435" width="1" height="4" fill="#000"/><rect x="1086" y="435" width="1" height="4" fill="#000"/><rect x="1115" y="435" width="1" height="8" fill="#000"/></svg><div class="t" style="left:52.38px;top:414px;color:#000;transform:scaleX(1.0475)">0</div><div class="t" style="left:32.26px;top:344px;color:#000;transform:scaleX(1.0985)">0.05</div><div class="t" style="left:40.54px;top:275px;color:#000;transform:scaleX(1.0899)">0.1</div><div class="t" style="left:32.26px;top:206px;color:#000;transform:scaleX(1.0985)">0.15</div><div class="t" style="left:40.64px;top:136px;color:#000;transform:scaleX(1.0841)">0.2</div><div class="t" style="left:32.26px;top:67px;color:#000;transform:scaleX(1.0985)">0.25</div><div class="t" style="left:72.23px;top:444px;color:#000;transform:scaleX(1.1159)">250</div><div class="t" style="left:219.46px;top:444px;color:#000;transform:scaleX(1.1053)">300</div><div class="t" style="left:367.46px;top:444px;color:#000;transform:scaleX(1.1053)">350</div><div class="t" style="left:514.68px;top:444px;color:#000;transform:scaleX(1.1090)">400</div><div class="t" style="left:661.68px;top:444px;color:#000;transform:scaleX(1.1090)">450</div><div class="t" style="left:808.35px;top:444px;color:#000;transform:scaleX(1.1058)">500</div><div class="t" style="left:956.35px;top:444px;color:#000;transform:scaleX(1.1058)">550</div><div class="t" style="left:1103.23px;top:444px;color:#000;transform:scaleX(1.1159)">600</div><div class="t" style="left:576.90px;top:461px;color:#000;transform:scaleX(1.0249);font-size:15px;font-weight:bold">λ [nm]</div><div class="t" style="left:157.90px;top:235px;color:#ff0000;transform:scaleX(0.9957);font-size:16px;font-weight:bold">λ(abs)</div><div class="t" style="left:293.00px;top:235px;color:#ff00ff;transform:scaleX(0.9804);font-size:16px;font-weight:bold">λ(scat)</div><div class="t" style="left:381.42px;top:407px;color:#ff9999;transform:scaleX(0.9610);font-size:16px;font-weight:bold">Start</div><div class="t" style="left:1080.87px;top:407px;color:#ff9999;transform:scaleX(1.0319);font-size:16px;font-weight:bold">End</div><div class="t" style="left:9.5px;top:278.70px;font-size:15px;font-weight:bold;transform:rotate(-90deg) scaleX(1.0088)">A(λ) [a.u.]</div><div class="btn" style="left:0px;top:491px;width:114px;height:24px;"></div><div class="t" style="left:52.15px;top:493px;color:#000;transform:scaleX(1.2774)">&lt;</div><div style="position:absolute;left:114px;top:491px;width:795px;height:22px;background:#787878"></div><div style="position:absolute;left:116px;top:493px;width:792px;height:2px;background:#c8c4c4"></div><div style="position:absolute;left:116px;top:495px;width:22px;height:16px;background:linear-gradient(90deg,#efefef,#efefef)"></div><div style="position:absolute;left:140px;top:495px;width:150px;height:16px;background:linear-gradient(90deg,#efefef,#ffffff)"></div><div style="position:absolute;left:292px;top:495px;width:233px;height:16px;background:linear-gradient(90deg,#f0ffff,#70ffff)"></div><div style="position:absolute;left:527px;top:495px;width:228px;height:16px;background:linear-gradient(90deg,#60ffff 0%,#00ffff 62%,#2cdcdc)"></div><div style="position:absolute;left:757px;top:495px;width:135px;height:16px;background:linear-gradient(90deg,#3ccccc,#7c8080)"></div><div style="position:absolute;left:894px;top:495px;width:14px;height:16px;background:linear-gradient(90deg,#808080,#808080)"></div><div style="position:absolute;left:139px;top:495px;width:1px;height:16px;background:#c8c4c4"></div><div style="position:absolute;left:291px;top:495px;width:1px;height:16px;background:#c8c4c4"></div><div style="position:absolute;left:526px;top:495px;width:1px;height:16px;background:#c8c4c4"></div><div style="position:absolute;left:756px;top:495px;width:1px;height:16px;background:#c8c4c4"></div><div style="position:absolute;left:893px;top:495px;width:1px;height:16px;background:#c8c4c4"></div><div class="btn" style="left:910px;top:491px;width:114px;height:24px;"></div><div class="t" style="left:962.15px;top:493px;color:#000;transform:scaleX(1.2774)">&gt;</div><div class="t" style="left:1068.74px;top:494px;color:#000;transform:scaleX(1.0992)">600</div><div class="t" style="left:517.31px;top:513px;color:#000;transform:scaleX(1.1715);font-weight:bold">Concentration</div><div class="btn" style="left:0px;top:530px;width:379px;height:23px;"></div><div class="t" style="left:158.94px;top:532px;color:#ff0000;transform:scaleX(1.0593)">Residuals</div><div class="btn" style="left:379px;top:530px;width:380px;height:23px;"></div><div class="t" style="left:528.31px;top:532px;color:#ff0000;transform:scaleX(1.0475)">PVP Analysis</div><div class="btn" style="left:759px;top:530px;width:378px;height:23px;"></div><div class="t" style="left:926.63px;top:532px;color:#000;transform:scaleX(1.0606)">Cancel</div><div class="t" style="left:4.20px;top:555px;color:#000;transform:scaleX(1.0114)">A:</div><div class="fld" style="left:21px;top:553px;width:135px;height:23px;"></div><div class="t" style="left:84.68px;top:555px;color:#000;transform:scaleX(1.0475)">0</div><div class="t" style="left:159.88px;top:555px;color:#000;transform:scaleX(1.0236)">B:</div><div class="fld" style="left:177px;top:553px;width:135px;height:23px;"></div><div class="t" style="left:204.95px;top:555px;color:#000;transform:scaleX(1.1463)">6.2506e+07</div><div class="t" style="left:315.95px;top:555px;color:#000;transform:scaleX(1.0763)">C,Min.,Max.:</div><div class="fld" style="left:397px;top:553px;width:135px;height:23px;"></div><div class="t" style="left:460.85px;top:555px;color:#000;transform:scaleX(1.0291)">4</div><div class="fld" style="left:532px;top:553px;width:134px;height:23px;"></div><div class="t" style="left:589.26px;top:555px;color:#000;transform:scaleX(1.0887)">3.9</div><div class="fld" style="left:666px;top:553px;width:135px;height:23px;"></div><div class="t" style="left:723.98px;top:555px;color:#000;transform:scaleX(1.0824)">4.1</div><div class="t" style="left:803.70px;top:555px;color:#000;transform:scaleX(1.0988)">Fit range:</div><div class="fld pink" style="left:868px;top:553px;width:135px;height:23px;"></div><div class="t" style="left:923.69px;top:555px;color:#000;transform:scaleX(1.0887)">350</div><div class="fld pink focus" style="left:1003px;top:553px;width:134px;height:23px;"></div><div class="t" style="left:1057.96px;top:555px;color:#000;transform:scaleX(1.0992)">600</div><div style="position:absolute;left:1082px;top:557px;width:1px;height:15px;background:#000"></div><div class="t" style="left:-0.12px;top:578px;color:#000;transform:scaleX(1.1164)">Fit controls: ε :</div><div class="fld" style="left:96px;top:576px;width:170px;height:23px;"></div><div class="t" style="left:166.83px;top:578px;color:#000;transform:scaleX(1.0775)">1e-7</div><div class="t" style="left:269.62px;top:578px;color:#000;transform:scaleX(1.1520)">Iter.:</div><div class="fld" style="left:303px;top:576px;width:171px;height:23px;"></div><div class="t" style="left:372.29px;top:578px;color:#000;transform:scaleX(1.1028)">1000</div><div class="t" style="left:477.50px;top:578px;color:#000;transform:scaleX(1.0963)">Max. calls:</div><div class="fld" style="left:548px;top:576px;width:170px;height:23px;"></div><div class="t" style="left:612.70px;top:578px;color:#000;transform:scaleX(1.1095)">10000</div><div class="combo" style="left:719px;top:577px;width:109px;height:21px;"></div><div class="t" style="left:723.70px;top:578px;color:#000;transform:scaleX(1.1312)">no weighting</div><svg style="position:absolute;left:813px;top:586px" width="8" height="5"><path d="M0 0h8l-4 4z" fill="#606060"/></svg><div class="btn" style="left:829px;top:576px;width:80px;height:23px;"></div><div class="t" style="left:861.25px;top:578px;color:#000;transform:scaleX(1.0071)">Fit</div><div class="btn" style="left:909px;top:576px;width:80px;height:23px;"></div><div class="t" style="left:930.82px;top:578px;color:#ff0000;transform:scaleX(1.0419)">Reset</div><div class="btn" style="left:989px;top:576px;width:148px;height:23px;"></div><div class="t" style="left:992.33px;top:578px;color:#000;transform:scaleX(1.1102)">Create adjusted curve</div><div class="t" style="left:0.00px;top:601px;color:#000;transform:scaleX(1.1470)">λ(abs) [nm]:</div><div class="fld" style="left:79px;top:599px;width:39px;height:23px;"></div><div class="t" style="left:86.41px;top:601px;color:#000;transform:scaleX(1.0987)">274</div><div class="t" style="left:118.30px;top:601px;color:#000;transform:scaleX(1.1267)">A(λ,abs) [a.u.]:</div><div class="fld" style="left:213px;top:599px;width:53px;height:23px;"></div><div class="t" style="left:221.56px;top:601px;color:#000;transform:scaleX(1.1038)">0.235</div><div class="t" style="left:266.00px;top:601px;color:#000;transform:scaleX(1.1557)">λ(scat) [nm]:</div><div class="fld" style="left:350px;top:599px;width:38px;height:23px;"></div><div class="t" style="left:357.19px;top:601px;color:#000;transform:scaleX(1.0887)">320</div><div class="t" style="left:388.40px;top:601px;color:#000;transform:scaleX(1.1345)">A(λ,scat) [a.u.]:</div><div class="fld" style="left:487px;top:599px;width:53px;height:23px;"></div><div class="t" style="left:495.56px;top:601px;color:#000;transform:scaleX(1.1038)">0.015</div><div class="t" style="left:542.57px;top:601px;color:#000;transform:scaleX(1.1295)">Extc. coef. [mL/(mg*cm)]:</div><div class="fld" style="left:713px;top:599px;width:53px;height:23px;"></div><div class="t" style="left:721.61px;top:601px;color:#000;transform:scaleX(1.1042)">0.481</div><div class="chk" style="left:766px;top:602px;width:15px;height:15px;"></div><div class="t" style="left:785.42px;top:601px;color:#000;transform:scaleX(1.0764)">Disp. Corr.</div><div style="position:absolute;left:765px;top:621px;width:93px;height:1px;background:#0a7878"></div><div class="t" style="left:4.09px;top:624px;color:#000;transform:scaleX(1.1085)">Uncorr., Scat. corr.,Full corr. c [mg/mL]:</div><div class="fld" style="left:257px;top:622px;width:291px;height:23px;"></div><div class="t" style="left:384.46px;top:624px;color:#000;transform:scaleX(1.1101)">0.489</div><div class="t" style="left:548.53px;top:624px;color:#000;transform:scaleX(1.3368)">,</div><div class="fld" style="left:552px;top:622px;width:291px;height:23px;"></div><div class="t" style="left:679.46px;top:624px;color:#000;transform:scaleX(1.1101)">0.459</div><div class="t" style="left:843.53px;top:624px;color:#000;transform:scaleX(1.3368)">,</div><div class="fld" style="left:848px;top:622px;width:289px;height:23px;"></div></body></html>
